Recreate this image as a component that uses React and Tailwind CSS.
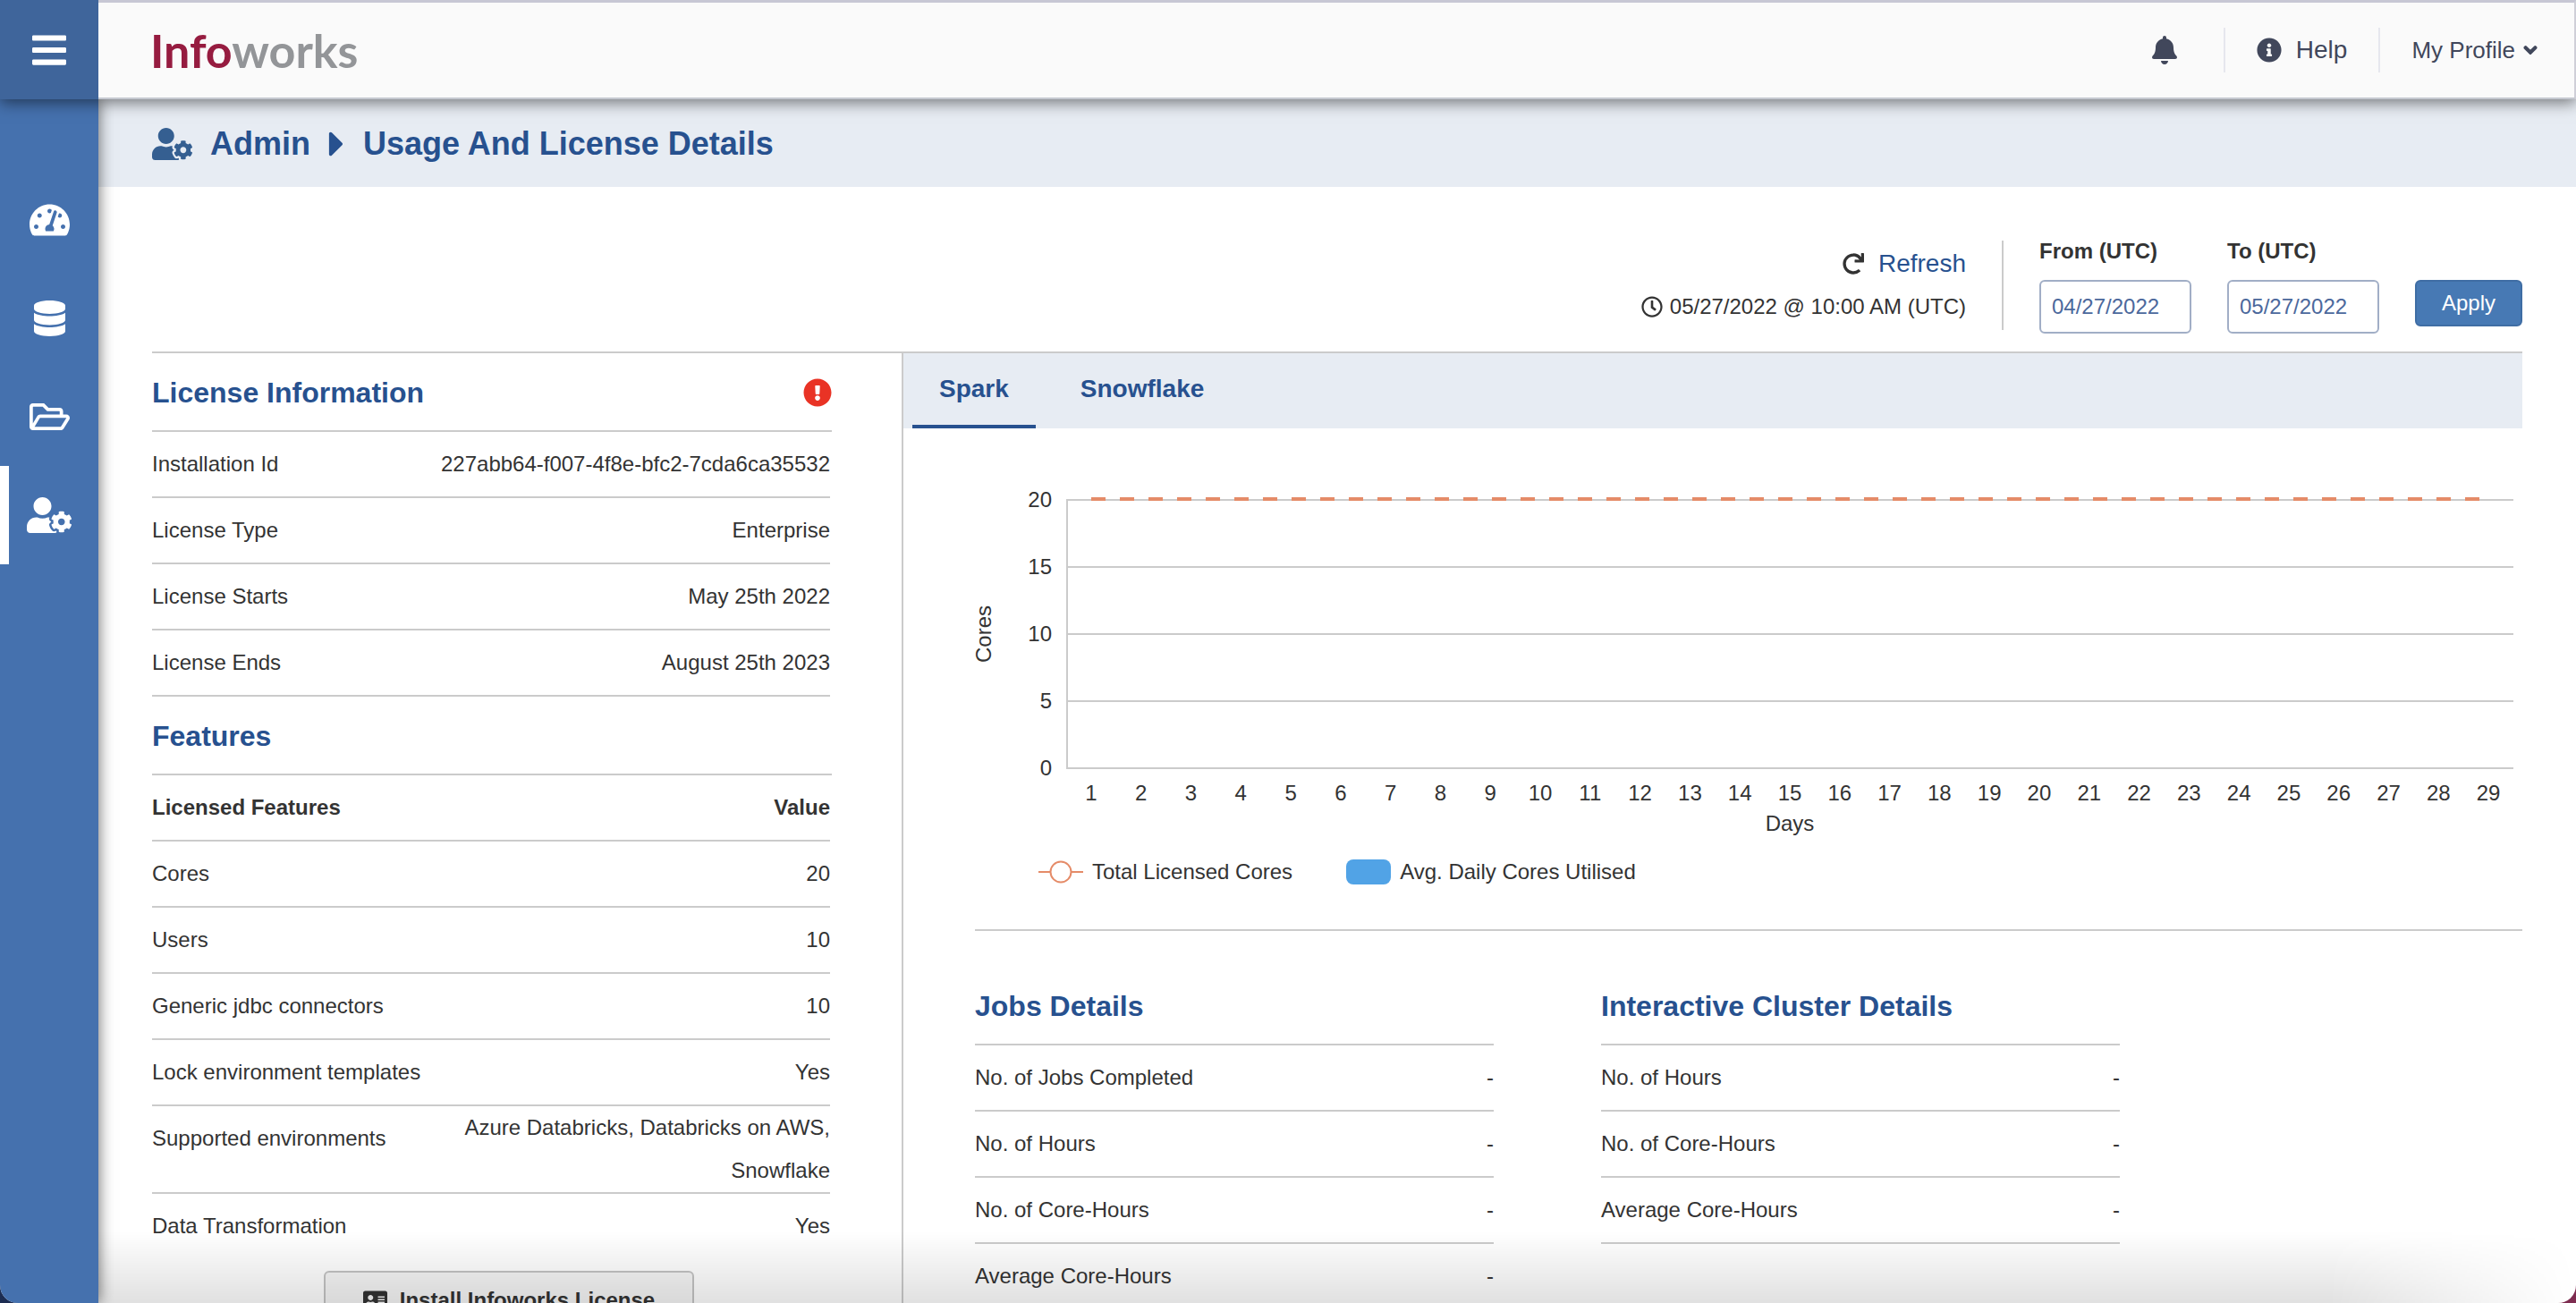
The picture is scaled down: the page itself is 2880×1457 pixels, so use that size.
import {
  FaAddressCard,
  FaBars,
  FaBell,
  FaCaretRight,
  FaChevronDown,
  FaDatabase,
  FaExclamationCircle,
  FaInfoCircle,
  FaRedo,
  FaRegClock,
  FaRegFolderOpen,
  FaTachometerAlt,
  FaUserCog,
} from "react-icons/fa";

const licenseInfo = [
  ["Installation Id", "227abb64-f007-4f8e-bfc2-7cda6ca35532"],
  ["License Type", "Enterprise"],
  ["License Starts", "May 25th 2022"],
  ["License Ends", "August 25th 2023"],
];

const features = [
  ["Cores", "20"],
  ["Users", "10"],
  ["Generic jdbc connectors", "10"],
  ["Lock environment templates", "Yes"],
  ["Supported environments", "Azure Databricks, Databricks on AWS, Snowflake"],
  ["Data Transformation", "Yes"],
];

const jobsDetails = [
  ["No. of Jobs Completed", "-"],
  ["No. of Hours", "-"],
  ["No. of Core-Hours", "-"],
  ["Average Core-Hours", "-"],
];

const clusterDetails = [
  ["No. of Hours", "-"],
  ["No. of Core-Hours", "-"],
  ["Average Core-Hours", "-"],
];

const days = Array.from({ length: 29 }, (_, i) => i + 1);
const ticks = [20, 15, 10, 5, 0];

const Sidebar = () => {
  return (
    <nav className="w-[110px] shrink-0 bg-[#4571ae] pt-20 text-white relative z-10 shadow-[0_0_16px_rgba(0,0,0,0.6)]">
      <a href="#dashboard" aria-label="Dashboard" className="flex h-[110px] items-center justify-center">
        <FaTachometerAlt className="h-10 w-[45px]" />
      </a>
      <a href="#sources" aria-label="Data Sources" className="flex h-[110px] items-center justify-center">
        <FaDatabase className="h-10 w-[35px]" />
      </a>
      <a href="#domains" aria-label="Domains" className="flex h-[110px] items-center justify-center">
        <FaRegFolderOpen className="h-10 w-[45px]" />
      </a>
      <a
        href="#admin"
        aria-label="Admin"
        className="flex h-[110px] items-center justify-center border-l-10 border-white pr-[10px]"
      >
        <FaUserCog className="h-10 w-[50px]" />
      </a>
    </nav>
  );
};

const Header = () => {
  return (
    <header className="relative z-20 flex h-[111px] shrink-0 shadow-[0_4px_16px_rgba(0,0,0,0.5)]">
      <button type="button" aria-label="Menu" className="flex w-[110px] items-center justify-center bg-[#3f659b] text-white">
        <FaBars className="h-11 w-[38px]" />
      </button>
      <div className="flex flex-1 items-center justify-between border-t-3 border-r-2 border-b-2 border-t-[#c7c7d4] border-r-[#cfcfd8] border-b-[#c5c8d0] bg-[#fafafa] pr-10 pl-[58px] text-[#41475b]">
        <a href="#home" className="font-['Lato',sans-serif] text-[52px] leading-[60px] font-bold text-[#961c40]">
          Info<span className="text-[#939598]">works</span>
        </a>
        <div className="flex items-center">
          <button type="button" aria-label="Notifications" className="pr-[52px]">
            <FaBell className="h-8 w-7" />
          </button>
          <a href="#help" className="flex h-[50px] items-center gap-4 border-x-2 border-[#e6e7ee] px-[35px] text-[28px]">
            <FaInfoCircle className="size-7" />
            Help
          </a>
          <button type="button" className="flex items-center gap-2 pl-[35px] text-[26px]">
            My Profile
            <FaChevronDown className="h-4 w-[18px] overflow-visible stroke-current stroke-[50]" />
          </button>
        </div>
      </div>
    </header>
  );
};

const SectionTitle = ({ children }) => {
  return (
    <h2 className="flex h-[88px] items-center justify-between border-b-2 border-[#cbcbcb] pt-0.5 text-[32px] font-bold text-[#27518f]">
      {children}
    </h2>
  );
};

const InfoTable = ({ rows, head, lastLine }) => {
  return (
    <table className="w-full border-separate border-spacing-0">
      {head && (
        <thead>
          <tr>
            <th className="h-[74px] border-b-2 border-[#cbcbcb] text-left">{head[0]}</th>
            <th className="h-[74px] border-b-2 border-[#cbcbcb] text-right">{head[1]}</th>
          </tr>
        </thead>
      )}
      <tbody className={lastLine ? "" : "[&>tr:last-child>*]:border-transparent"}>
        {rows.map(([name, value]) => (
          <tr key={name}>
            <th
              scope="row"
              className="border-b-2 border-[#cbcbcb] text-left align-top leading-[72px] font-normal whitespace-nowrap"
            >
              {name}
            </th>
            <td className="h-[74px] border-b-2 border-[#cbcbcb] text-right align-middle leading-[48px]">{value}</td>
          </tr>
        ))}
      </tbody>
    </table>
  );
};

const Toolbar = () => {
  return (
    <div className="flex h-[186px] justify-end gap-10 border-b-2 border-[#cbcbcb] pt-[60px]">
      <div className="flex h-[100px] flex-col items-end justify-center border-r-2 border-[#cbcbcb] pr-10 leading-[48px]">
        <button type="button" className="flex items-center gap-4 text-[28px] text-[#27518f]">
          <FaRedo className="size-6 text-[#333]" />
          Refresh
        </button>
        <p className="flex items-center gap-2">
          <FaRegClock className="size-6" />
          05/27/2022 @ 10:00 AM (UTC)
        </p>
      </div>
      <form className="flex gap-10" onSubmit={(e) => e.preventDefault()}>
        <div className="flex flex-col gap-5">
          <label htmlFor="from" className="leading-6 font-bold">
            From (UTC)
          </label>
          <input
            id="from"
            type="text"
            defaultValue="04/27/2022"
            className="h-[60px] w-[170px] rounded-md border-2 border-[#a1aec6] px-3 text-[#4b689c]"
          />
        </div>
        <div className="flex flex-col gap-5">
          <label htmlFor="to" className="leading-6 font-bold">
            To (UTC)
          </label>
          <input
            id="to"
            type="text"
            defaultValue="05/27/2022"
            className="h-[60px] w-[170px] rounded-md border-2 border-[#a1aec6] px-3 text-[#4b689c]"
          />
        </div>
        <button
          type="submit"
          className="mt-11 h-[52px] w-[120px] rounded-md border-2 border-[#3f6da4] bg-[#4779b4] text-white"
        >
          Apply
        </button>
      </form>
    </div>
  );
};

const CoresChart = () => {
  return (
    <figure className="pt-16">
      <div className="flex">
        <div className="flex w-5 items-center justify-center">
          <span className="-rotate-90">Cores</span>
        </div>
        <div className="mr-4 flex w-[66px] flex-col justify-between text-right leading-8">
          {ticks.map((tick) => (
            <span key={tick}>{tick}</span>
          ))}
        </div>
        <div className="flex-1 py-[15px] pr-[10px]">
          <svg className="block h-[302px] w-full overflow-visible" aria-hidden="true">
            {ticks.map((tick) => (
              <line key={tick} x1="0" x2="100%" y1={301 - tick * 15} y2={301 - tick * 15} stroke="#cbcbcb" strokeWidth="2" />
            ))}
            <line x1="1" x2="1" y1="0" y2="302" stroke="#cbcbcb" strokeWidth="2" />
            <line x1="1.73%" x2="98.27%" y1="0" y2="0" stroke="#e58b68" strokeWidth="4" strokeDasharray="16 16" />
          </svg>
        </div>
      </div>
      <div className="-mt-[5px] pr-[10px] pl-[102px] text-center leading-[34px]">
        <div className="grid grid-cols-29">
          {days.map((day) => (
            <span key={day}>{day}</span>
          ))}
        </div>
        <p>Days</p>
      </div>
      <figcaption className="flex gap-[60px] pt-5 pl-[71px] leading-[34px]">
        <span className="flex items-center gap-[10px]">
          <svg className="h-7 w-[50px]" viewBox="0 0 50 28" fill="none" stroke="#e58b68" strokeWidth="2">
            <path d="M0 14h13M37 14h13" />
            <circle cx="25" cy="14" r="11.5" />
          </svg>
          Total Licensed Cores
        </span>
        <span className="flex items-center gap-[10px]">
          <i className="h-7 w-[50px] rounded-lg bg-[#51a3e6]" />
          Avg. Daily Cores Utilised
        </span>
      </figcaption>
    </figure>
  );
};

const App = () => {
  return (
    <div className="h-screen bg-linear-to-r from-[#1c2d52] to-[#7e2c50]">
      <div className="relative flex h-full flex-col overflow-hidden rounded-b-[20px] bg-white font-['Liberation_Sans',Arial,sans-serif] text-2xl text-[#333]">
        <Header />
        <div className="flex min-h-0 flex-1">
          <Sidebar />
          <main className="min-w-0 flex-1 overflow-hidden">
            <h1 className="flex h-[98px] items-center bg-[#e7ecf3] pt-0.5 pl-[60px] text-[36px] font-bold text-[#27518f]">
              <FaUserCog className="mr-5 h-9 w-[45px] text-[#355f91]" />
              <a href="#admin">Admin</a>
              <FaCaretRight className="mx-[18px] h-[46px] w-[23px]" />
              Usage And License Details
            </h1>

            <div className="px-[60px]">
              <Toolbar />
              <div className="flex">
                <section className="w-[840px] shrink-0 border-r-2 border-[#cbcbcb]">
                  <div className="w-[760px]">
                    <SectionTitle>
                      License Information
                      <FaExclamationCircle className="size-8 text-[#e93325]" />
                    </SectionTitle>
                    <div className="pr-0.5">
                      <InfoTable rows={licenseInfo} lastLine />
                    </div>
                    <SectionTitle>Features</SectionTitle>
                    <div className="pr-0.5">
                      <InfoTable rows={features} head={["Licensed Features", "Value"]} />
                    </div>
                  </div>
                  <div className="flex justify-center pt-3 pr-10">
                    <button
                      type="button"
                      className="flex h-[66px] items-center gap-[14px] rounded-md border-2 border-[#c4c4c4] bg-[#f6f6f6] px-[42px] font-bold"
                    >
                      <FaAddressCard className="h-6 w-[27px]" />
                      Install Infoworks License
                    </button>
                  </div>
                </section>

                <section className="min-w-0 flex-1">
                  <div role="tablist" className="flex gap-5 bg-[#e7ecf3] pl-[10px] text-[28px] font-bold text-[#27518f]">
                    <button
                      type="button"
                      role="tab"
                      aria-selected="true"
                      className="h-[84px] border-b-4 border-[#27518f] px-[30px]"
                    >
                      Spark
                    </button>
                    <button
                      type="button"
                      role="tab"
                      aria-selected="false"
                      className="h-[84px] border-b-4 border-transparent px-[30px]"
                    >
                      Snowflake
                    </button>
                  </div>
                  <div className="pl-20">
                    <CoresChart />
                    <div className="mt-[47px] flex gap-[120px] border-t-2 border-[#cbcbcb] pt-10">
                      <div className="w-[580px]">
                        <SectionTitle>Jobs Details</SectionTitle>
                        <InfoTable rows={jobsDetails} lastLine />
                      </div>
                      <div className="w-[580px]">
                        <SectionTitle>Interactive Cluster Details</SectionTitle>
                        <InfoTable rows={clusterDetails} lastLine />
                      </div>
                    </div>
                  </div>
                </section>
              </div>
            </div>
          </main>
        </div>
        {/* fade at the bottom edge of the window */}
        <div className="pointer-events-none absolute right-0 bottom-0 left-[110px] h-20 bg-linear-to-t from-black/12 to-transparent mask-r-from-90%" />
      </div>
    </div>
  );
};

export default App;
